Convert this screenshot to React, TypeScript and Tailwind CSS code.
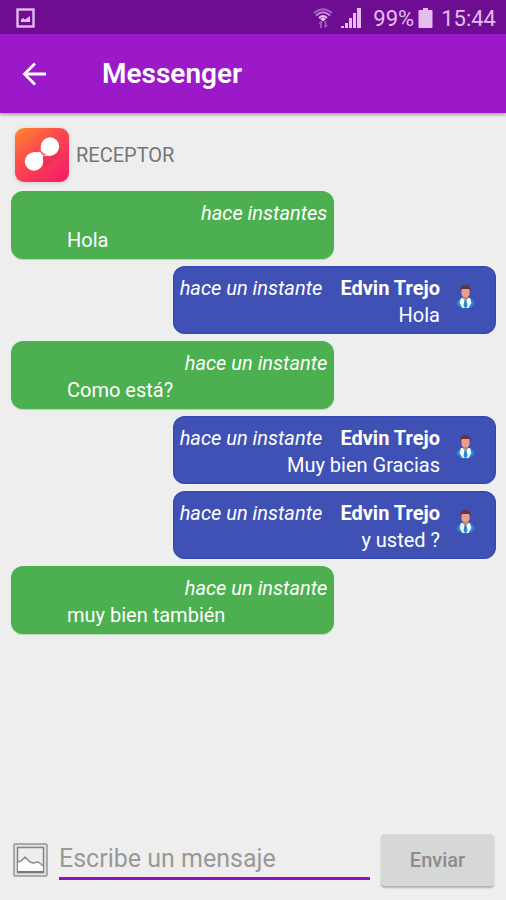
import React, { useState } from "react";

interface Message {
  id: number;
  author?: string;
  time: string;
  text: string;
}

const initialMessages: Message[] = [
  { id: 1, time: "hace instantes", text: "Hola" },
  { id: 2, author: "Edvin Trejo", time: "hace un instante", text: "Hola" },
  { id: 3, time: "hace un instante", text: "Como está?" },
  { id: 4, author: "Edvin Trejo", time: "hace un instante", text: "Muy bien Gracias" },
  { id: 5, author: "Edvin Trejo", time: "hace un instante", text: "y usted ?" },
  { id: 6, time: "hace un instante", text: "muy bien también" },
];

const StatusBar = () => (
  <div className="flex h-[34px] items-center bg-[#6f0d92] pt-0.5 pr-2.5 pl-4 text-[22px] text-[#e2bdee]">
    <svg width="19" height="20" viewBox="0 0 19 20" fill="none" aria-hidden="true">
      <rect x="1.5" y="1.5" width="16" height="17" stroke="currentColor" strokeWidth="2.4" />
      <path d="M5 14V11.5L7 10l2 1.5L14 8v6z" fill="currentColor" />
    </svg>
    <svg className="ml-auto" width="20" height="22" viewBox="0 0 20 22" fill="none" aria-hidden="true">
      <path d="M1 6Q10-1.5 19 6" stroke="#a45dbb" strokeWidth="1.8" />
      <path d="M3 8.5Q10 2 17 8.5" stroke="#c48ad6" strokeWidth="2" />
      <path d="M6 11Q10 7 14 11" stroke="currentColor" strokeWidth="2" />
      <path d="M10 10l3 2-3 2.5-3-2.5z" fill="currentColor" />
      <path d="M8 21v-6M12.5 14v6" stroke="#a45dbb" strokeWidth="1.8" />
      <path d="M6 16.5l2-2 1 1M11.5 19l1 1 2-2" stroke="#a45dbb" strokeWidth="1.2" />
    </svg>
    <svg className="ml-2" width="20" height="20" viewBox="0 0 20 20" fill="currentColor" aria-hidden="true">
      <path d="M0 18h3v2H0zM4 15h3v5H4zM8 10h3v10H8zM12 5h3v15h-3zM16 0h4v20h-4z" />
    </svg>
    <span className="ml-3">99%</span>
    <svg className="ml-1" width="15" height="20" viewBox="0 0 15 20" fill="currentColor" aria-hidden="true">
      <path d="M5 0h5v2h3.5q1 0 1 1v16q0 1-1 1h-12q-1 0-1-1V3q0-1 1-1H5z" />
    </svg>
    <span className="ml-2">15:44</span>
  </div>
);

const ReceptorLogo = () => (
  <svg className="drop-shadow-sm" width="54" height="54" viewBox="0 0 54 54" aria-hidden="true">
    <defs>
      <linearGradient id="logo" x1="0" y1="0" x2="0.8" y2="1">
        <stop offset="0" stopColor="#ff8a2c" />
        <stop offset="0.45" stopColor="#fb4a4d" />
        <stop offset="1" stopColor="#f51f68" />
      </linearGradient>
    </defs>
    <rect width="54" height="54" rx="9" fill="url(#logo)" />
    <path d="M28 30l13-3 3-8-4-7 5 3v13L29 41z" fill="#d92450" opacity="0.35" />
    <path d="M26 17q0 5-.5 7l3.5 4q3-.5 7 0z" fill="#fff" />
    <circle cx="35" cy="18.5" r="9.2" fill="#fff" />
    <path d="M18 24q5 .5 7.5-.5l2.5 3.5q-.5 3 0 8z" fill="#fff" />
    <circle cx="19" cy="33.5" r="9.2" fill="#fff" />
    <path d="M25.5 22.5q1 3.5 5 4.5" fill="none" stroke="#f5546b" strokeWidth="1.6" />
  </svg>
);

const Avatar = () => (
  <svg width="20" height="24" viewBox="0 0 20 24" aria-hidden="true">
    <path d="M.5 19q0-4 4.5-5.5h9q4.5 1.5 4.5 5.5-3 4.5-9 4.5T.5 19z" fill="#1e88d8" />
    <path d="M5 13h9l1.5 5-3 5h-6l-3-5z" fill="#f4f8ff" />
    <path d="M8.5 15h2l1 6-2 2.5-2-2.5z" fill="#2b86cf" />
    <path d="M7 10h5v4l-2.5 1.5L7 14z" fill="#c98670" />
    <rect x="5.5" y="2" width="8" height="10" rx="3.5" fill="#e9a08a" />
    <path d="M4.5 6.5Q3.5 0 9.5 0t5 6.5l-1-2.5h-8z" fill="#6b3238" />
  </svg>
);

const PictureIcon = () => (
  <svg width="35" height="34" viewBox="0 0 35 34" fill="none" aria-hidden="true">
    <rect x="1" y="1" width="33" height="32" rx="1" fill="#e2e2e2" stroke="#969696" strokeWidth="1.5" />
    <rect x="4.5" y="4.5" width="26" height="25" fill="#eeeeee" stroke="#858585" strokeWidth="1.5" />
    <path d="M5 19l3-1 4-4 5 5 3 1 5-1 3 2 2 2v6H5z" fill="#fcfcfc" />
    <path d="M5 19l3-1 4-4 5 5 3 1 5-1 3 2 2 2" stroke="#8f8f8f" strokeWidth="1.5" />
    <path d="M5 29h25" stroke="#777" strokeWidth="2" />
  </svg>
);

const Bubble: React.FC<{ message: Message }> = ({ message }) => {
  if (message.author) {
    return (
      <li className="flex w-2/3 self-end rounded-xl bg-[#3f51b5] pt-[9px] pr-5 pb-[5px] pl-[7px] shadow-[inset_0_0_2px_#1230a8]">
        <div className="flex-1 text-right">
          <div className="flex justify-between">
            <em>{message.time}</em>
            <strong>{message.author}</strong>
          </div>
          <p>{message.text}</p>
        </div>
        <div className="ml-4 pt-2.5">
          <Avatar />
        </div>
      </li>
    );
  }

  return (
    <li className="w-2/3 rounded-xl bg-[#4caf50] pt-[9px] pr-[7px] pb-[5px] pl-14 shadow-[0_1px_1px_#bcd0bc]">
      <em className="block text-right">{message.time}</em>
      <p>{message.text}</p>
    </li>
  );
};

const App: React.FC = () => {
  const [messages, setMessages] = useState<Message[]>(initialMessages);
  const [draft, setDraft] = useState<string>("");

  const handleSubmit = (e: React.FormEvent) => {
    e.preventDefault();
    if (!draft.trim()) return;
    setMessages([
      ...messages,
      { id: messages.length + 1, author: "Edvin Trejo", time: "hace un instante", text: draft },
    ]);
    setDraft("");
  };

  return (
    <div className="flex min-h-screen flex-col bg-[#eeeeee] font-[Roboto,sans-serif]">
      <StatusBar />
      <header className="flex h-[79px] items-center bg-[#9b19c9] pl-[22px] text-white shadow-[0_2px_3px_rgba(0,0,0,0.3)]">
        <button type="button" aria-label="Atrás">
          <svg width="25" height="24" viewBox="0 0 25 24" fill="none" stroke="currentColor" strokeWidth="2.8" aria-hidden="true">
            <path d="M24 12H3M13 1.5L2.5 12 13 22.5" />
          </svg>
        </button>
        <h1 className="ml-[55px] text-[28px] font-semibold">Messenger</h1>
      </header>

      <main className="flex-1 pr-2.5 pl-[11px]">
        <div className="flex items-center gap-[7px] px-1 pt-[15px] pb-[9px] text-xl text-[#757575]">
          <ReceptorLogo />
          <h2>RECEPTOR</h2>
        </div>
        <ul className="flex flex-col gap-[7px] text-xl leading-[27px] text-white">
          {messages.map((message) => (
            <Bubble key={message.id} message={message} />
          ))}
        </ul>
      </main>

      <form onSubmit={handleSubmit} className="flex items-center gap-[11px] pr-3 pb-3.5 pl-[13px]">
        <button type="button" aria-label="Adjuntar imagen">
          <PictureIcon />
        </button>
        <input
          type="text"
          aria-label="Mensaje"
          placeholder="Escribe un mensaje"
          value={draft}
          onChange={(e) => setDraft(e.target.value)}
          className="min-w-0 flex-1 border-b-[3px] border-[#8d12bd] text-[25px] leading-9 text-[#212121] outline-none placeholder:text-[#999999]"
        />
        <button
          type="submit"
          className="h-[52px] w-[113px] rounded-sm bg-[#d6d7d7] text-xl font-medium text-[#8c8c8c] shadow-[0_2px_2px_rgba(0,0,0,0.25)]"
        >
          Enviar
        </button>
      </form>
    </div>
  );
};

export default App;
